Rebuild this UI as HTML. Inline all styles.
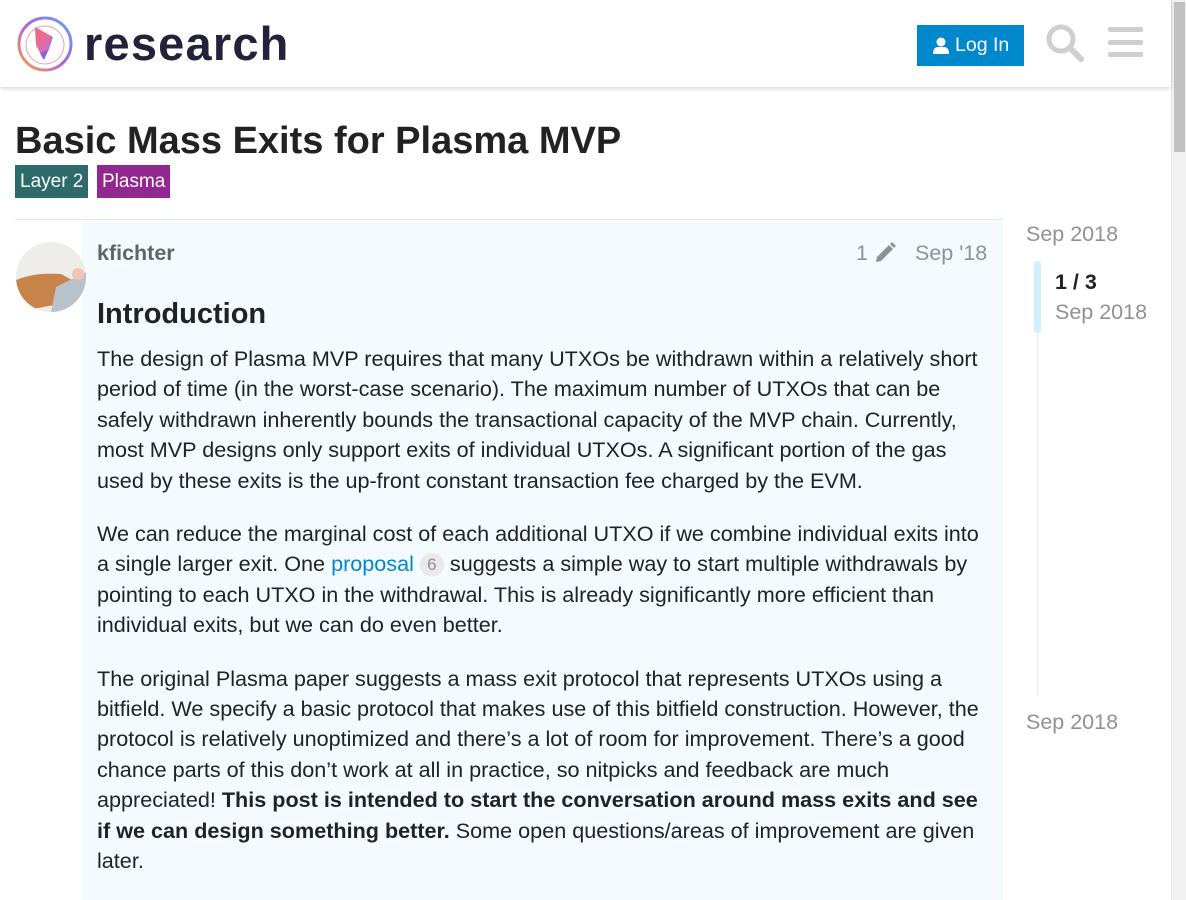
<!DOCTYPE html>
<html><head><meta charset="utf-8"><style>
*{box-sizing:border-box;margin:0;padding:0}
body{width:1186px;height:900px;overflow:hidden;background:#fff;font-family:"Liberation Sans",sans-serif;color:#222;position:relative}
.hdr{position:absolute;left:0;top:0;width:1171px;height:87px;background:#fff;box-shadow:0 2px 4px rgba(0,0,0,.15);z-index:2}
.sb{position:absolute;left:1171px;top:0;width:15px;height:900px;background:#f1f1f1;border-left:1px solid #e4e4e4}
.sb div{position:absolute;left:2px;top:2px;width:11px;height:150px;background:#c1c1c1}
.logo-t{position:absolute;left:84px;top:16px;font-size:47px;font-weight:bold;color:#23223a;letter-spacing:1.2px}
.btn{position:absolute;left:917px;top:25px;width:107px;height:41px;background:#0088cc;color:#fff;font-size:19.5px;line-height:41px;padding-left:38px}
h1{position:absolute;left:15px;top:120px;font-size:38px;font-weight:bold;color:#222}
.tag{position:absolute;top:165px;height:33px;color:#fff;font-size:19px;line-height:33px;padding:0 5px}
.post{position:absolute;left:82px;top:220px;width:921px;height:680px;background:#f3fbff}
.line{position:absolute;left:15px;top:219px;width:988px;height:1px;background:#e9e9e9}
.av{position:absolute;left:16px;top:242px;width:70px;height:70px;border-radius:50%;overflow:hidden;background:#f0eeea}
.name{position:absolute;left:97px;top:241px;font-size:21.5px;font-weight:bold;color:#646464}
.meta{position:absolute;top:241px;font-size:21.5px;color:#919191}
.body{position:absolute;left:97px;top:295px;width:892px;font-size:21.6px;line-height:30.4px;color:#222}
.body h2{font-size:29px;line-height:38px;margin-bottom:11px}
.body p{margin-bottom:23px}
.body a{color:#0088cc;text-decoration:none}
.badge{display:inline-block;background:#e9e9e9;color:#919191;border-radius:12px;font-size:17px;line-height:24px;width:24px;text-align:center;vertical-align:1px}
.tl{position:absolute;font-size:21.5px;color:#919191}
</style></head><body>
<div class="hdr">
<svg style="position:absolute;left:16px;top:15px" width="58" height="58" viewBox="0 0 58 58">
<defs><linearGradient id="g" x1="0" y1="0" x2="1" y2="1"><stop offset="0" stop-color="#f06a6a"/><stop offset=".5" stop-color="#e96aa8"/><stop offset="1" stop-color="#6a8af0"/></linearGradient>
<linearGradient id="g2" x1="0" y1="1" x2="1" y2="0"><stop offset="0" stop-color="#f7a83a"/><stop offset=".5" stop-color="#b45ee0"/><stop offset="1" stop-color="#5aa8f5"/></linearGradient></defs>
<circle cx="29" cy="29" r="26" fill="none" stroke="url(#g2)" stroke-width="3"/>
<circle cx="29" cy="30" r="19" fill="none" stroke="#e8a0b8" stroke-width="1"/>
<path d="M19 12 L37 22 L33 34 L27 44 L20 30 Z" fill="url(#g)"/>
<path d="M24 38 L33 34 L28 45 Z" fill="#9a5ad8"/>
</svg>
<div class="logo-t">research</div>
<div class="btn"><svg style="position:absolute;left:16px;top:12px" width="16" height="17" viewBox="0 0 16 17"><circle cx="8" cy="5" r="4.5" fill="#fff"/><path d="M0 17 Q0 10 5 10 L11 10 Q16 10 16 17Z" fill="#fff"/></svg>Log In</div>
<svg style="position:absolute;left:1045px;top:23px" width="40" height="40" viewBox="0 0 40 40"><circle cx="16" cy="16" r="12" fill="none" stroke="#cfcfcf" stroke-width="5"/><path d="M25 25 L36 36" stroke="#cfcfcf" stroke-width="6" stroke-linecap="round"/></svg>
<svg style="position:absolute;left:1108px;top:27px" width="36" height="32"><rect x="0" y="0" width="35" height="5" rx="2" fill="#cfcfcf"/><rect x="0" y="13" width="35" height="5" rx="2" fill="#cfcfcf"/><rect x="0" y="25" width="35" height="5" rx="2" fill="#cfcfcf"/></svg>
</div>
<div class="sb"><div></div></div>
<h1>Basic Mass Exits for Plasma MVP</h1>
<div class="tag" style="left:15px;background:#2d6b6b">Layer 2</div>
<div class="tag" style="left:97px;background:#92278f">Plasma</div>
<div class="line"></div>
<div class="post"></div>
<div class="av"><svg width="70" height="70"><rect width="70" height="70" fill="#efedea"/><path d="M0 38 Q20 30 45 32 L60 40 L55 60 L0 70Z" fill="#c8834a"/><path d="M40 45 L70 30 L70 70 L35 70Z" fill="#b9c2cc"/><circle cx="62" cy="32" r="6" fill="#f0c4b0"/></svg></div>
<div class="name">kfichter</div>
<div class="meta" style="left:856px">1</div>
<svg style="position:absolute;left:874px;top:242px" width="22" height="22" viewBox="0 0 22 22"><path d="M2 20 L3 15 L15 3 L19 7 L7 19 Z" fill="#919191"/><path d="M16 2 L18 0 L22 4 L20 6Z" fill="#919191"/></svg>
<div class="meta" style="left:915px">Sep '18</div>
<div class="body">
<h2>Introduction</h2>
<p>The design of Plasma MVP requires that many UTXOs be withdrawn within a relatively short period of time (in the worst-case scenario). The maximum number of UTXOs that can be safely withdrawn inherently bounds the transactional capacity of the MVP chain. Currently, most MVP designs only support exits of individual UTXOs. A significant portion of the gas used by these exits is the up-front constant transaction fee charged by the EVM.</p>
<p>We can reduce the marginal cost of each additional UTXO if we combine individual exits into a single larger exit. One <a>proposal</a> <span class="badge">6</span> suggests a simple way to start multiple withdrawals by pointing to each UTXO in the withdrawal. This is already significantly more efficient than individual exits, but we can do even better.</p>
<p>The original Plasma paper suggests a mass exit protocol that represents UTXOs using a bitfield. We specify a basic protocol that makes use of this bitfield construction. However, the protocol is relatively unoptimized and there’s a lot of room for improvement. There’s a good chance parts of this don’t work at all in practice, so nitpicks and feedback are much appreciated! <b>This post is intended to start the conversation around mass exits and see if we can design something better.</b> Some open questions/areas of improvement are given later.</p>
</div>
<div class="tl" style="left:1026px;top:222px">Sep 2018</div>
<div style="position:absolute;left:1037px;top:330px;width:1px;height:366px;background:#e9e9e9"></div>
<div style="position:absolute;left:1034px;top:261px;width:7px;height:72px;background:#d1f0ff;border-radius:3px"></div>
<div class="tl" style="left:1055px;top:270px;color:#222;font-weight:bold">1 / 3</div>
<div class="tl" style="left:1055px;top:300px">Sep 2018</div>
<div class="tl" style="left:1026px;top:710px">Sep 2018</div>
</body></html>
